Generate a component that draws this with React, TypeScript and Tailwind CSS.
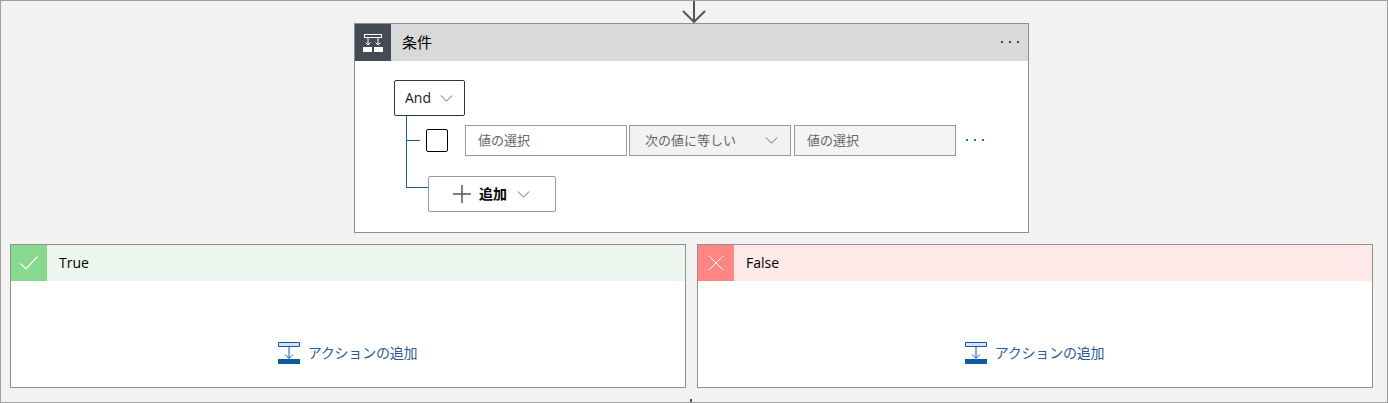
import React from 'react';

const font = 'font-["Open_Sans","Noto_Sans_CJK_JP",sans-serif]';

function Chevron({ className }: { className: string }) {
    return (
        <svg viewBox="0 0 14 8" className={className} fill="none" stroke="currentColor" strokeWidth="1">
            <path d="M0.5 0.5 L7 7 L13.5 0.5" />
        </svg>
    );
}

function Dots({ className }: { className: string }) {
    return (
        <svg viewBox="0 0 18 3" className={className} fill="currentColor">
            <rect x="0" y="0" width="2" height="2" />
            <rect x="8" y="0" width="2" height="2" />
            <rect x="16" y="0" width="2" height="2" />
        </svg>
    );
}

function ConditionIcon() {
    return (
        <svg viewBox="0 0 20 18" className="w-5 h-[18px]" fill="none" stroke="#ffffff" strokeWidth="1">
            <rect x="1.5" y="0.5" width="17" height="3" />
            <path d="M5 4 V11 M15 4 V11 M2.5 8.5 L5 11 L7.5 8.5 M12.5 8.5 L15 11 L17.5 8.5" />
            <rect x="0" y="13" width="9" height="5" fill="#ffffff" stroke="none" />
            <rect x="11" y="13" width="9" height="5" fill="#ffffff" stroke="none" />
        </svg>
    );
}

function AddActionIcon() {
    return (
        <svg viewBox="0 0 22 22" className="w-[22px] h-[22px]" fill="none" stroke="#0f5a9e" strokeWidth="1">
            <path d="M0.5 0.5 H21.5 V4.5 H0.5 Z" fill="#d6e4f0" />
            <path d="M11 5 V16 M7 12.5 L11 16.5 L15 12.5" />
            <rect x="0" y="17" width="22" height="5" fill="#0f5a9e" stroke="none" />
        </svg>
    );
}

function Branch({ label, icon, iconBg, headBg }: { label: string; icon: React.ReactNode; iconBg: string; headBg: string }) {
    return (
        <div className="w-[676px] h-[144px] border border-[#8f8f8f] bg-white flex flex-col">
            <div className={`flex h-9 items-center ${headBg}`}>
                <div className={`w-9 h-9 flex items-center justify-center ${iconBg}`}>{icon}</div>
                <span className="ml-[12px] text-sm text-black">{label}</span>
            </div>
            <div className="flex-1 flex items-center justify-center gap-2 pt-[38px] pr-[1px]">
                <AddActionIcon />
                <span className="text-sm text-[#2b5c94] tracking-[-0.2px]">アクションの追加</span>
            </div>
        </div>
    );
}

export default function App() {
    return (
        <div className={`w-[1388px] h-[403px] bg-[#f2f2f2] border border-[#a0a0a0] flex flex-col relative overflow-hidden ${font}`}>
            <div className="h-[22px] flex justify-center">
                <svg viewBox="0 0 24 22" className="w-6 h-[22px] text-[#555555]" fill="none" stroke="currentColor" strokeWidth="2">
                    <path d="M12 0 V21 M1 10 L12 21 L23 10" />
                </svg>
            </div>

            <div className="ml-[353px] w-[675px] h-[210px] border border-[#8f8f8f] bg-white flex flex-col">
                <div className="flex h-[37px] bg-[#d8d9db] items-center shrink-0">
                    <div className="w-9 h-[37px] bg-[#454b55] flex items-center justify-center">
                        <ConditionIcon />
                    </div>
                    <span className="ml-[11px] text-[15px] text-black">条件</span>
                    <Dots className="ml-auto mr-[9px] w-[18px] h-[3px] text-[#444444]" />
                </div>

                <div className="pl-[39px] pt-[19px] flex flex-col relative">
                    <div className="w-[71px] h-9 border border-[#333333] rounded-[2px] flex items-center pl-[10px] gap-[9px] text-sm text-[#222222]">
                        And
                        <Chevron className="w-[13px] h-[7px] text-[#555555]" />
                    </div>

                    <div className="absolute left-[51px] top-[55px] w-[1px] h-[71px] bg-[#1f5a8c]" />
                    <div className="absolute left-[51px] top-[79px] w-[14px] h-[1px] bg-[#1f5a8c]" />
                    <div className="absolute left-[51px] top-[126px] w-[22px] h-[1px] bg-[#1f5a8c]" />

                    <div className="flex items-center mt-[9px] h-[31px] pl-[32px]">
                        <div className="w-[22px] h-[23px] border border-black rounded-[2px]" />
                        <div className="ml-[17px] w-[162px] h-[31px] border border-[#999999] pl-3 flex items-center text-[13px] text-[#666666]">値の選択</div>
                        <div className="ml-[2px] w-[162px] h-[31px] border border-[#999999] bg-[#f2f2f2] pl-[15px] pr-3 flex items-center justify-between text-[13px] text-[#666666]">
                            次の値に等しい
                            <Chevron className="w-[13px] h-[7px] text-[#555555]" />
                        </div>
                        <div className="ml-[3px] w-[162px] h-[31px] border border-[#999999] bg-[#f4f4f4] pl-3 flex items-center text-[13px] text-[#666666]">値の選択</div>
                        <Dots className="ml-[10px] w-[18px] h-[3px] text-[#1f73b7]" />
                    </div>

                    <div className="mt-5 ml-[34px] w-32 h-9 border border-[#999999] rounded-[2px] bg-white flex items-center pl-6 shrink-0">
                        <svg viewBox="0 0 18 18" className="w-[18px] h-[18px] text-[#555555]" fill="none" stroke="currentColor" strokeWidth="1.5">
                            <path d="M9 0 V18 M0 9 H18" />
                        </svg>
                        <span className="ml-2 text-sm font-bold text-black">追加</span>
                        <Chevron className="ml-[10px] w-[13px] h-[7px] text-[#555555]" />
                    </div>
                </div>
            </div>

            <div className="flex mt-[11px] ml-[9px] gap-[11px]">
                <Branch
                    label="True"
                    headBg="bg-[#ecf6ee]"
                    iconBg="bg-[#88d98d]"
                    icon={
                        <svg viewBox="0 0 18 14" className="w-[18px] h-[14px]" fill="none" stroke="#ffffff" strokeWidth="1.2">
                            <path d="M0.5 7.5 L6 13 L17.5 0.5" />
                        </svg>
                    }
                />
                <Branch
                    label="False"
                    headBg="bg-[#ffe9e9]"
                    iconBg="bg-[#ff8682]"
                    icon={
                        <svg viewBox="0 0 14 14" className="w-[14px] h-[14px]" fill="none" stroke="#ffffff" strokeWidth="1">
                            <path d="M0 0 L14 14 M14 0 L0 14" />
                        </svg>
                    }
                />
            </div>

            <div className="absolute left-[689px] bottom-0 w-[2px] h-[3px] bg-[#555555]" />
        </div>
    );
}
